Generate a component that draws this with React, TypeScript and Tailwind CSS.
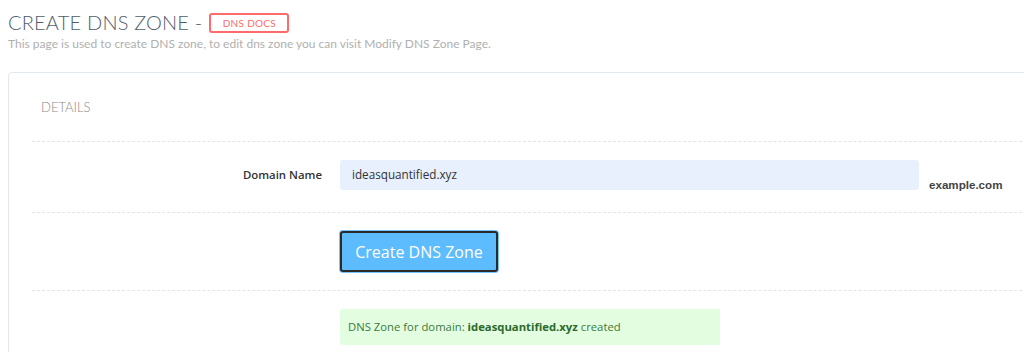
import React from "react";

export default function App() {
  return (
    <div className="w-[1024px] h-[352px] bg-white overflow-hidden" style={{ fontFamily: "'Open Sans', 'Liberation Sans', sans-serif" }}>
      <div className="pl-[8px] pt-[10px]">
        <div className="flex items-center h-[24px]">
          <h1 className="text-[20px] leading-[24px] font-light text-[#4f5d6b] tracking-[0.2px]" style={{ fontFamily: "Lato, 'Liberation Sans', sans-serif" }}>
            CREATE DNS ZONE -
          </h1>
          <span className="ml-[7px] mt-[2px] h-[20px] w-[80px] justify-center flex items-center border-2 border-[#ff6b6b] rounded-[3px] text-[10px] text-[#ff6b6b] tracking-[0.3px]" style={{ fontFamily: "Lato, 'Liberation Sans', sans-serif" }}>
            DNS DOCS
          </span>
        </div>
        <p className="mt-[3px] text-[12px] leading-[14px] text-[#b0b0b0]" style={{ fontFamily: "Lato, 'Liberation Sans', sans-serif" }}>
          This page is used to create DNS zone, to edit dns zone you can visit Modify DNS Zone Page.
        </p>
      </div>
      <div className="ml-[8px] mt-[21px] w-[1040px] border border-[#e1e8ee] rounded-[4px] pl-[23px]">
        <div className="pt-[26px] pb-[26px] pl-[9px] text-[13px] leading-[16px] text-[#8a8a8a] font-light" style={{ fontFamily: "Lato, 'Liberation Sans', sans-serif" }}>
          DETAILS
        </div>
        <div className="border-t border-dashed border-[#dde6ef]" />
        <div className="flex items-start h-[70px] pt-[18px]">
          <div className="w-[290px] h-[30px] flex items-center justify-end text-[11.4px] font-semibold text-[#333]">Domain Name</div>
          <div className="ml-[18px] w-[579px] h-[30px] bg-[#e8f0fe] rounded-[3px] flex items-center pl-[12px] text-[11.7px] text-[#333]">
            ideasquantified.xyz
          </div>
          <div className="ml-[10px] mt-[18px] text-[11.6px] leading-[14px] font-bold text-[#444]" style={{ fontFamily: "'Liberation Sans', Arial, sans-serif" }}>
            example.com
          </div>
        </div>
        <div className="border-t border-dashed border-[#dde6ef]" />
        <div className="h-[77px] pt-[18px]">
          <button className="ml-[308px] w-[158px] h-[41px] rounded-[3px] bg-[#5cbcfd] border-2 border-[#2a2a2a] ring-1 ring-[#74c5ff] text-white text-[16px] flex items-center justify-center">
            Create DNS Zone
          </button>
        </div>
        <div className="border-t border-dashed border-[#dde6ef]" />
        <div className="pt-[18px] pb-[10px]">
          <div className="ml-[308px] w-[380px] h-[36px] bg-[#e2fde0] rounded-[3px] flex items-center pl-[8px] text-[11.3px] text-[#3d7a3d]">
            DNS Zone for domain:&nbsp;<span className="font-bold text-[#2d6a2d]">ideasquantified.xyz</span>&nbsp;created
          </div>
        </div>
      </div>
    </div>
  );
}
